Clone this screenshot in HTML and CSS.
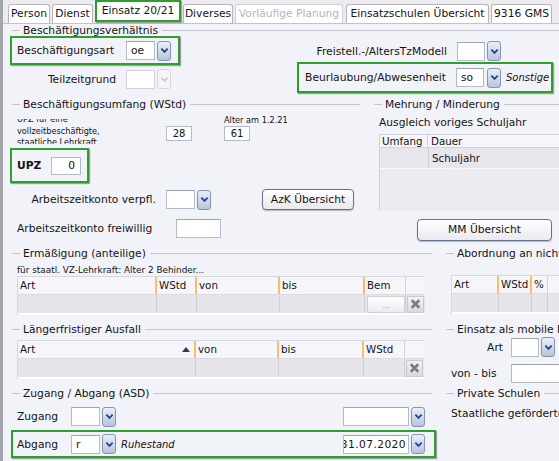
FILE: index.html
```html
<!DOCTYPE html>
<html lang="de">
<head>
<meta charset="utf-8">
<title>Einsatz 20/21</title>
<link rel="stylesheet" href="styles.css">
</head>
<body>
<div class="app">
  <nav class="tabs">
    <div class="tab tab-person">Person</div>
    <div class="tab tab-dienst">Dienst</div>
    <div class="tab tab-sel">Einsatz 20/21</div>
    <div class="tab tab-div">Diverses</div>
    <div class="tab tab-dis">Vorläufige Planung</div>
    <div class="tab tab-schulen">Einsatzschulen Übersicht</div>
    <div class="tab tab-gms">9316 GMS</div>
  </nav>

  <section class="sec1">
    <div class="title t-sec1"><span>Beschäftigungsverhältnis</span></div>
    <div class="sec1-body">
      <div class="col-a">
        <div class="hl hl-bart">
          <span class="lbl lbl-bart">Beschäftigungsart</span>
          <div class="combo"><div class="field f-29">oe</div><div class="cbtn"><svg viewBox="0 0 10 7" width="9" height="7"><polyline points="1.5,1.5 5,5 8.5,1.5"/></svg></div></div>
        </div>
        <div class="row row-tz">
          <span class="lbl lbl-tz">Teilzeitgrund</span>
          <div class="combo combo-dis"><div class="field f-29"></div><div class="cbtn"><svg viewBox="0 0 10 7" width="9" height="7"><polyline points="1.5,1.5 5,5 8.5,1.5"/></svg></div></div>
        </div>
      </div>
      <div class="col-b">
        <div class="row row-frei">
          <span class="lbl lbl-frei">Freistell.-/AltersTzModell</span>
          <div class="combo"><div class="field f-28"></div><div class="cbtn"><svg viewBox="0 0 10 7" width="9" height="7"><polyline points="1.5,1.5 5,5 8.5,1.5"/></svg></div></div>
        </div>
        <div class="hl hl-beurl">
          <span class="lbl lbl-beurl">Beurlaubung/Abwesenheit</span>
          <div class="combo"><div class="field f-28">so</div><div class="cbtn"><svg viewBox="0 0 10 7" width="9" height="7"><polyline points="1.5,1.5 5,5 8.5,1.5"/></svg></div></div>
          <span class="desc">Sonstige</span>
        </div>
      </div>
    </div>
  </section>

  <div class="mid">
    <section class="umfang">
      <div class="title t-umfang"><span>Beschäftigungsumfang (WStd)</span></div>
      <div class="row row-upz1">
        <div class="upz-note"><div>UPZ für eine<br>vollzeitbeschäftigte,<br>staatliche Lehrkraft</div></div>
        <div class="num num-28">28</div>
        <div class="alter">
          <span class="small">Alter am 1.2.21</span>
          <div class="num num-61">61</div>
        </div>
      </div>
      <div class="hl hl-upz">
        <span class="lbl-upz">UPZ</span>
        <div class="num num-0">0</div>
      </div>
      <div class="row row-azk1">
        <span class="lbl lbl-azk">Arbeitszeitkonto verpfl.</span>
        <div class="combo"><div class="field f-29"></div><div class="cbtn"><svg viewBox="0 0 10 7" width="9" height="7"><polyline points="1.5,1.5 5,5 8.5,1.5"/></svg></div></div>
        <div class="btn btn-azk">AzK Übersicht</div>
      </div>
      <div class="row row-azk2">
        <span class="lbl lbl-azk2">Arbeitszeitkonto freiwillig</span>
        <div class="field f-45"></div>
      </div>
    </section>

    <section class="mehrung">
      <div class="title t-mehrung"><span>Mehrung / Minderung</span></div>
      <div class="ausgleich">Ausgleich voriges Schuljahr</div>
      <div class="mtbl">
        <div class="mtbl-head"><span class="mc-umfang">Umfang</span><span class="mc-dauer">Dauer</span></div>
        <div class="mtbl-row"><span class="mc-umfang"></span><span class="mc-dauer">Schuljahr</span></div>
        <div class="mtbl-fill"></div>
      </div>
      <div class="btn btn-mm">MM Übersicht</div>
    </section>
  </div>

  <div class="lower">
    <section class="lcell erm">
      <div class="title t-left"><span>Ermäßigung (anteilige)</span></div>
      <div class="note">für staatl. VZ-Lehrkraft: Alter 2 Behinder...</div>
      <div class="tbl tbl-left">
        <div class="thead">
          <span class="th ce-art sep-o">Art</span>
          <span class="th ce-wstd sep-o">WStd</span>
          <span class="th ce-von sep-o">von</span>
          <span class="th ce-bis sep-o">bis</span>
          <span class="th ce-bem">Bem</span>
          <span class="th ce-x"></span>
        </div>
        <div class="trow">
          <span class="td ce-art"></span>
          <span class="td ce-wstd"></span>
          <span class="td ce-von"></span>
          <span class="td ce-bis"></span>
          <span class="td ce-bem"><span class="dots">...</span></span>
          <span class="td ce-x"><span class="xbtn"><svg viewBox="0 0 16 16" width="16" height="16"><path d="M4 4 L12 12 M12 4 L4 12"/></svg></span></span>
        </div>
      </div>
    </section>

    <section class="rcell abord">
      <div class="title t-right"><span>Abordnung an nichtstaatliche Schulen</span></div>
      <div class="tbl tbl-right">
        <div class="thead">
          <span class="th cr-art sep-o">Art</span>
          <span class="th cr-wstd sep-o">WStd</span>
          <span class="th cr-pct">%</span>
          <span class="th cr-rest"></span>
        </div>
        <div class="trow">
          <span class="td cr-art"></span>
          <span class="td cr-wstd"></span>
          <span class="td cr-pct"></span>
          <span class="td cr-rest"></span>
        </div>
      </div>
    </section>

    <section class="lcell ausfall">
      <div class="title t-left"><span>Längerfristiger Ausfall</span></div>
      <div class="tbl tbl-left tbl-ausfall">
        <div class="thead">
          <span class="th ca-art sep-o">Art<svg class="sort" viewBox="0 0 8 5" width="8" height="5"><polygon points="0,5 4,0 8,5"/></svg></span>
          <span class="th ce-von sep-o">von</span>
          <span class="th ce-bis sep-o">bis</span>
          <span class="th ce-bem">WStd</span>
          <span class="th ce-x"></span>
        </div>
        <div class="trow">
          <span class="td ca-art"></span>
          <span class="td ce-von"></span>
          <span class="td ce-bis"></span>
          <span class="td ce-bem"></span>
          <span class="td ce-x"><span class="xbtn"><svg viewBox="0 0 16 16" width="16" height="16"><path d="M4 4 L12 12 M12 4 L4 12"/></svg></span></span>
        </div>
      </div>
    </section>

    <section class="rcell mobil">
      <div class="title t-right"><span>Einsatz als mobile Reserve</span></div>
      <div class="row row-mart">
        <span class="lbl lbl-mart">Art</span>
        <div class="combo"><div class="field f-28"></div><div class="cbtn"><svg viewBox="0 0 10 7" width="9" height="7"><polyline points="1.5,1.5 5,5 8.5,1.5"/></svg></div></div>
      </div>
      <div class="row row-vonbis">
        <span class="lbl lbl-vonbis">von - bis</span>
        <div class="field f-60"></div>
      </div>
    </section>

    <section class="lcell zugang">
      <div class="title t-left"><span>Zugang / Abgang (ASD)</span></div>
      <div class="row row-zug">
        <span class="lbl lbl-zug">Zugang</span>
        <div class="combo"><div class="field f-29"></div><div class="cbtn"><svg viewBox="0 0 10 7" width="9" height="7"><polyline points="1.5,1.5 5,5 8.5,1.5"/></svg></div></div>
        <span class="desc desc-zug"></span>
        <div class="combo"><div class="field f-66"></div><div class="cbtn"><svg viewBox="0 0 10 7" width="9" height="7"><polyline points="1.5,1.5 5,5 8.5,1.5"/></svg></div></div>
      </div>
      <div class="hl hl-abg">
        <span class="lbl lbl-zug">Abgang</span>
        <div class="combo"><div class="field f-29">r</div><div class="cbtn"><svg viewBox="0 0 10 7" width="9" height="7"><polyline points="1.5,1.5 5,5 8.5,1.5"/></svg></div></div>
        <span class="desc desc-zug">Ruhestand</span>
        <div class="combo"><div class="field f-66 f-date"><span>31.07.2020</span></div><div class="cbtn"><svg viewBox="0 0 10 7" width="9" height="7"><polyline points="1.5,1.5 5,5 8.5,1.5"/></svg></div></div>
      </div>
    </section>

    <section class="rcell privat">
      <div class="title t-right"><span>Private Schulen</span></div>
      <div class="staatl">Staatliche geförderte Ersatzschulen</div>
    </section>
  </div>
</div>
</body>
</html>
```

FILE: styles.css
```css
html, body {
  margin: 0;
  padding: 0;
  overflow: hidden;
}
body {
  width: 559px;
  height: 461px;
  background: #f2f2f9;
  font-family: "DejaVu Sans", "Open Sans", sans-serif;
  font-size: 10.7px;
  color: #141414;
}
.app {
  box-sizing: border-box;
  height: 461px;
  border-left: 3px solid #a4a4ac;
  white-space: nowrap;
}

/* tabs */
.tabs {
  display: flex;
  align-items: flex-end;
  height: 23px;
  padding-left: 5px;
  gap: 2px;
  background: #ebebf0;
  border-bottom: 1px solid #c2c2ca;
}
.tab {
  box-sizing: border-box;
  height: 19px;
  line-height: 18px;
  text-align: center;
  background: #fff;
  border: 1px solid #b6b6bc;
  border-bottom: none;
  border-radius: 3px 3px 0 0;
}
.tab-person { width: 42px; }
.tab-dienst { width: 41px; }
.tab-sel {
  width: 86px;
  height: 22px;
  line-height: 18px;
  margin-bottom: 1px;
  border: 2px solid #2f9e2f;
  border-radius: 0;
  box-shadow: 1px 1px 1px rgba(0,0,0,0.3);
}
.tab-div { width: 50px; }
.tab-dis { width: 108px; color: #b4b4bc; border-color: #d0d0d6; }
.tab-schulen { width: 143px; margin-left: 1px; }
.tab-gms { width: 61px; }

/* section titles */
.title {
  display: flex;
  align-items: center;
  height: 14px;
}
.title::before {
  content: "";
  flex: none;
  width: 8px;
  height: 1px;
  background: #c4c4cc;
  margin-right: 3px;
}
.title::after {
  content: "";
  flex: 1;
  height: 1px;
  background: #c4c4cc;
  margin-left: 4px;
}
.t-sec1 { height: 12px; padding-left: 9px; }
.t-umfang { padding: 0 12px 0 9px; }
.t-mehrung { padding-left: 2px; }
.t-left { padding: 0 8px 0 9px; }
.t-right { padding-left: 6px; }

/* generic */
.row { display: flex; align-items: center; }
.lbl { flex: none; }
.hl {
  box-sizing: border-box;
  display: flex;
  align-items: center;
  border: 2px solid #2f9e2f;
  box-shadow: 1px 1px 1px rgba(0,0,0,0.35);
}
.combo { display: flex; align-items: center; gap: 2px; flex: none; }
.field {
  box-sizing: border-box;
  flex: none;
  height: 19px;
  line-height: 17px;
  padding: 0 4px;
  background: #fff;
  border: 1px solid #b3bbca;
  border-top-color: #9ba4b4;
}
.f-28 { width: 28px; }
.f-29 { width: 29px; }
.f-45 { width: 45px; height: 19px; }
.f-60 { width: 60px; }
.f-66 { width: 66px; }
.f-date { padding: 0 2px 0 0; overflow: hidden; display: flex; justify-content: flex-end; letter-spacing: 0.4px; }
.cbtn {
  box-sizing: border-box;
  width: 14px;
  height: 20px;
  border: 1px solid #8494b4;
  border-radius: 3px;
  background: linear-gradient(#eaeff8, #b7c5dc);
  display: flex;
  align-items: center;
  justify-content: center;
}
.cbtn svg polyline { fill: none; stroke: #23488a; stroke-width: 2.1; }
.combo-dis .field { border-color: #cfd3dc; }
.combo-dis .cbtn { background: #f6f6fa; border-color: #d2d6de; }
.combo-dis .cbtn svg polyline { stroke: #c9ccd4; }
.desc { font-style: italic; font-size: 10px; }

.btn {
  box-sizing: border-box;
  flex: none;
  text-align: center;
  background: linear-gradient(#ffffff, #e9e9ef);
  border: 1px solid #66738f;
  border-radius: 4px;
  box-shadow: 0 1px 1px rgba(0,0,0,0.25);
}

/* section 1 */
.sec1-body {
  display: grid;
  grid-template-columns: 287px 1fr;
  padding-left: 7px;
  height: 57px;
}
.hl-bart { width: 170px; height: 29px; padding-left: 5px; }
.lbl-bart { width: 109px; }
.row-tz { margin-top: 4px; height: 20px; }
.lbl-tz { width: 106px; margin-right: 10px; text-align: right; }
.row-frei { margin-top: 5px; height: 20px; }
.lbl-frei { width: 150px; margin-right: 10px; text-align: right; }
.hl-beurl { width: 256px; height: 31px; margin-top: 1px; }
.lbl-beurl { width: 147px; margin-right: 10px; text-align: right; }
.hl-beurl .combo { gap: 3px; }
.hl-beurl .desc { margin-left: 5px; }

/* middle */
.mid {
  display: grid;
  grid-template-columns: 369px 1fr;
  height: 149px;
  margin-top: 4px;
}
.row-upz1 { align-items: flex-start; height: 37px; }
.upz-note {
  width: 149px;
  height: 25px;
  margin: 8px 0 0 14px;
  overflow: hidden;
  display: flex;
  align-items: center;
  font-size: 8.2px;
  line-height: 11.5px;
}
.num {
  box-sizing: border-box;
  height: 15px;
  background: #fff;
  border: 1px solid #b3bbca;
  text-align: center;
  font-size: 10px;
  line-height: 13px;
}
.num-28 { width: 26px; margin-top: 15px; }
.alter { display: flex; flex-direction: column; margin-left: 32px; }
.small { font-size: 8.2px; line-height: 10px; margin-top: 4px; }
.num-61 { width: 26px; margin-top: 1px; }
.hl-upz { width: 79px; height: 35px; margin-left: 7px; padding-left: 5px; }
.lbl-upz { width: 34px; font-weight: bold; }
.num-0 { width: 30px; height: 18px; text-align: right; padding-right: 5px; line-height: 16px; font-size: 10.7px; }
.row-azk1 { margin-top: 6px; height: 21px; }
.lbl-azk { width: 153px; margin-right: 10px; text-align: right; }
.btn-azk { width: 92px; height: 21px; line-height: 19px; margin-left: 51px; }
.row-azk2 { margin-top: 8px; height: 20px; }
.lbl-azk2 { width: 149px; margin-right: 10px; padding-left: 14px; }

.ausgleich { margin: 5px 0 0 7px; line-height: 14px; height: 14px; }
.mtbl {
  margin: 4px 0 0 7px;
  width: 200px;
  border-left: 1px solid #d2d2da;
  border-top: 1px solid #d2d2da;
  font-size: 10.3px;
}
.mtbl-head, .mtbl-row { display: flex; }
.mtbl-head { height: 12px; line-height: 12px; background: #f5f5fa; border-bottom: 1px solid #d4d4dc; }
.mtbl-row { height: 20px; line-height: 20px; background: #e6e6ec; border-bottom: 1px solid #f8f8fc; }
.mc-umfang { width: 48px; padding-left: 2px; border-right: 1px solid #d0d0d8; box-sizing: border-box; }
.mc-dauer { padding-left: 3px; }
.mtbl-row .mc-umfang { width: 49px; }
.mtbl-fill { height: 42px; background: #ebebf1; }
.btn-mm { width: 135px; height: 22px; line-height: 20px; margin: 8px 0 0 45px; }

/* lower */
.lower {
  display: grid;
  grid-template-columns: 437px 1fr;
  grid-template-rows: 76px 64px 75px;
}
.note { font-size: 8.9px; line-height: 12px; margin: 4px 0 0 14px; height: 12px; }
.tbl {
  box-sizing: border-box;
  background: #fff;
  border-top: 1px solid #d6d6de;
  border-left: 1px solid #d6d6de;
  padding-bottom: 2px;
  font-size: 10.3px;
}
.tbl-left { width: 407px; margin-left: 14px; }
.tbl-ausfall { margin-top: 4px; }
.tbl-right { width: 140px; margin: 15px 0 0 11px; }
.thead, .trow { display: flex; }
.thead { height: 17px; line-height: 17px; background: #f5f5fa; border-bottom: 1px solid #dadae0; }
.trow { height: 18px; background: #e6e6ea; }
.th, .td { box-sizing: border-box; flex: none; border-right: 1px solid #d2d2d8; }
.th { padding-left: 2px; }
.th.sep-o { border-right: 2px solid #f5c060; }
.td { border-right-color: #d0d0d6; }
.ce-art { width: 139px; }
.ca-art { width: 178px; display: flex; align-items: center; }
.ce-wstd { width: 40px; }
.ce-von { width: 83px; }
.ce-bis { width: 85px; }
.ce-bem { width: 41px; }
.ce-x { width: 19px; border-right: none; }
.sort { margin-left: auto; margin-right: 4px; fill: #2b3b5c; }
.td.ce-bem { display: flex; align-items: center; padding: 0 0 0 2px; }
.dots {
  box-sizing: border-box;
  width: 38px;
  height: 17px;
  background: linear-gradient(#ffffff, #ececf0);
  border: 1px solid #cfcfd4;
  border-radius: 2px;
  color: #999;
  font-size: 7.5px;
  text-align: center;
  line-height: 17px;
}
.td.ce-x { display: flex; align-items: center; justify-content: center; background: #e6e6ea; }
.xbtn {
  box-sizing: border-box;
  width: 17px;
  height: 17px;
  border: 1px solid #c9c9cc;
  background: linear-gradient(#f2f2f2, #d9d9dc);
  display: flex;
  align-items: center;
  justify-content: center;
}
.xbtn svg path { stroke: #7a7a7c; stroke-width: 2.8; fill: none; }
.cr-art { width: 47px; }
.cr-wstd { width: 33px; }
.cr-pct { width: 16px; }
.cr-rest { width: 40px; border-right: none; }

.row-mart { margin-top: 1px; height: 20px; }
.lbl-mart { width: 52px; margin: 0 8px 0 11px; text-align: right; }
.row-vonbis { margin-top: 7px; height: 19px; }
.lbl-vonbis { width: 60px; margin-left: 11px; }

.row-zug { margin: 7px 0 0 14px; height: 19px; }
.lbl-zug { width: 54px; }
.desc-zug { width: 222px; margin-left: 5px; }
.hl-abg { width: 425px; height: 28px; margin: 4px 0 0 8px; padding-left: 4px; }
.staatl { margin: 7px 0 0 11px; line-height: 14px; }
```
